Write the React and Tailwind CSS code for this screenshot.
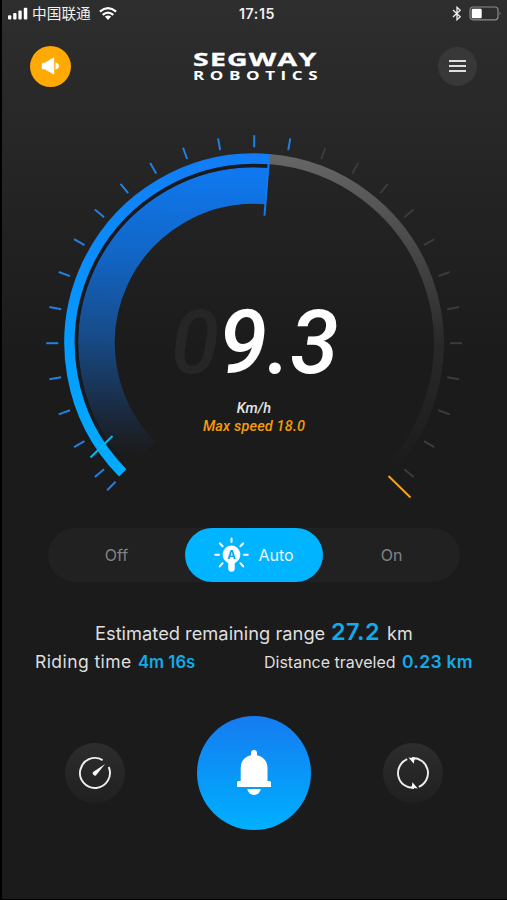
import React from "react";

const CX = 254.2;
const CY = 223.2;

function polar(radius, degrees) {
  const a = (degrees * Math.PI) / 180;
  return [CX + radius * Math.sin(a), CY - radius * Math.cos(a)];
}

function arc(radius, from, to) {
  const [x1, y1] = polar(radius, from);
  const [x2, y2] = polar(radius, to);
  return `M${x1} ${y1}A${radius} ${radius} 0 ${to - from > 180 ? 1 : 0} 1 ${x2} ${y2}`;
}

const TICKS = [-135, -130, -120, -110, -100, -90, -80, -70, -60, -50, -40, -30, -20, -10, 0, 10, 20, 30, 40, 50, 60, 70, 80, 90, 100, 110, 120, 130];

function StatusBar() {
  return (
    <div className="flex h-[27px] items-center justify-between pl-[6px] pr-[5px] text-white">
      <div className="flex w-[200px] items-center">
        <svg width="20" height="13" viewBox="0 0 20 13" fill="#fff">
          <rect x="0" y="8.2" width="3.3" height="4.3" rx="1" />
          <rect x="5.2" y="6" width="3.3" height="6.5" rx="1" />
          <rect x="10.4" y="3.5" width="3.3" height="9" rx="1" />
          <rect x="15.8" y="0.7" width="3.5" height="11.8" rx="1" />
        </svg>
        <span className="ml-[4px] font-['Noto_Sans_CJK_SC',sans-serif] text-[14.7px] leading-none text-[#f0f0f0]">中国联通</span>
        <svg className="ml-[8px]" width="18" height="13" viewBox="0 0 18 13" fill="none" stroke="#fff" strokeWidth="2.2">
          <path d="M0.9 4.6Q9 -2.2 17.1 4.6" />
          <path d="M3.7 7.9Q9 3.3 14.3 7.9" />
          <path d="M5.9 9.6Q9 7.2 12.1 9.6L9 12.9Z" fill="#fff" stroke="none" />
        </svg>
      </div>
      <span className="pl-[4px] pt-[1px] font-['Inter',sans-serif] text-[14.2px] font-semibold tracking-[0.6px] text-[#f0f0f0]">17:15</span>
      <div className="flex w-[200px] items-center justify-end gap-[7px]">
        <svg width="10" height="15" viewBox="0 0 10 15" fill="none" stroke="#eee" strokeWidth="1.3">
          <path d="M1 4L8.2 10.7L5 13.7V1.3L8.2 4.3L1 11" />
        </svg>
        <svg width="33" height="15" viewBox="0 0 33 15">
          <rect x="1" y="1" width="28" height="12.8" rx="3" fill="none" stroke="#8b8b8b" strokeWidth="1.2" />
          <rect x="2.7" y="2.7" width="10" height="9.5" rx="1.2" fill="#fff" />
          <path d="M30.7 5.5Q32.5 7.4 30.7 9.4Z" fill="#8b8b8b" />
        </svg>
      </div>
    </div>
  );
}

function Header() {
  return (
    <header className="flex h-[78px] items-center justify-between pl-[28px] pr-[30px]">
      <button className="flex size-[41px] items-center justify-center rounded-full bg-[#ffa904]">
        <svg width="19" height="18" viewBox="0 0 19 18" fill="#fff">
          <path d="M1.7 5.8H3.6L12.3 0.7Q13.2 0.3 13.2 1.2V16.8Q13.2 17.7 12.3 17.2L3.6 12.2H1.7Q0.8 12.2 0.8 11.3V6.7Q0.8 5.8 1.7 5.8Z" />
          <path d="M14.5 5.5Q18 6.1 18 9T14.5 12.5Z" />
        </svg>
      </button>
      <svg className="overflow-visible font-['Open_Sans',sans-serif]" width="126" height="34" viewBox="0 0 126 34" fill="#fff">
        <g transform="translate(1 16.6) scale(1.6 1)" stroke="#fff" strokeWidth="0.3">
          <text x="0" y="0" fontSize="17.8" fontWeight="700" textLength="77" lengthAdjust="spacing">SEGWAY</text>
        </g>
        <g transform="translate(1 30.8) scale(1.45 1)">
          <text x="0" y="0" fontSize="11.8" fontWeight="700" textLength="86" lengthAdjust="spacing">ROBOTICS</text>
        </g>
      </svg>
      <button className="flex size-[39px] flex-col items-center justify-center gap-[3px] rounded-full bg-[#383838]">
        <span className="h-[2px] w-[17px] bg-[#dedede]" />
        <span className="h-[2px] w-[17px] bg-[#dedede]" />
        <span className="h-[2px] w-[17px] bg-[#dedede]" />
      </button>
    </header>
  );
}

function Gauge() {
  const [nx1, ny1] = polar(188, 4.6);
  const [nx2, ny2] = polar(128, 4.6);
  return (
    <section className="relative h-[405px]">
      <svg className="-ml-[2px] block" width="507" height="405" viewBox="0 -15 507 405" fill="none">
        <defs>
          <linearGradient id="ring" gradientUnits="userSpaceOnUse" x1="0" y1="33" x2="0" y2="355">
            <stop offset="0" stopColor="#127cf5" />
            <stop offset="0.6" stopColor="#049cff" />
            <stop offset="1" stopColor="#00adff" />
          </linearGradient>
          <linearGradient id="band" gradientUnits="userSpaceOnUse" x1="10" y1="47" x2="0" y2="330">
            <stop offset="0" stopColor="#0f78ee" />
            <stop offset="0.3" stopColor="#1265c5" />
            <stop offset="0.6" stopColor="#174a85" />
            <stop offset="0.85" stopColor="#1a2a40" />
            <stop offset="0.94" stopColor="#1b2028" />
            <stop offset="1" stopColor="#1b1b1b" />
          </linearGradient>
          <linearGradient id="rest" gradientUnits="userSpaceOnUse" x1="0" y1="33" x2="0" y2="350">
            <stop offset="0" stopColor="#676767" />
            <stop offset="0.35" stopColor="#434343" />
            <stop offset="0.6" stopColor="#292929" />
            <stop offset="1" stopColor="#1b1b1b" />
          </linearGradient>
        </defs>
        <path d={arc(184.7, 4.5, 135)} stroke="url(#rest)" strokeWidth="10" />
        <path d={arc(157.7, -135, 4.5)} stroke="url(#band)" strokeWidth="36.5" />
        <path d={arc(177.8, -132, 4.5)} stroke="#171a1e" strokeWidth="3.6" />
        <path d={arc(184.7, -134.6, 4.5)} stroke="url(#ring)" strokeWidth="10.4" />
        <path d={`M${nx1} ${ny1}L${nx2} ${ny2}`} stroke="#127bf2" strokeWidth="2" />
        {TICKS.map((t) => {
          const [x1, y1] = polar(196, t);
          const [x2, y2] = polar(208, t);
          return <path key={t} d={`M${x1} ${y1}L${x2} ${y2}`} stroke={t <= 10 ? "#2080e4" : "#3c3c3c"} strokeWidth="2" />;
        })}
        <path d="M90.5 337.5L112.5 316" stroke="#0cb4e8" strokeWidth="2" />
        <path d="M388.5 356L410.5 377.5" stroke="#f0a51c" strokeWidth="2" />
      </svg>
      <div className="absolute inset-x-0 top-[193px] flex flex-col items-center font-['Roboto',sans-serif] font-medium italic">
        <div className="text-[88px] leading-[90px] tracking-[-0.4px] text-white">
          <span className="text-[#262626]">0</span>9.3
        </div>
        <div className="-ml-px mt-[12px] text-[14.5px] leading-[18px] text-[#e6e6e6]">Km/h</div>
        <div className="-ml-px text-[14.5px] leading-[18px] tracking-[0.15px] text-[#f39c0c]">Max speed 18.0</div>
      </div>
    </section>
  );
}

function AutoBulb() {
  return (
    <svg width="35" height="36" viewBox="0 0 35 36" fill="none">
      <path d="M17.5 1.5V5M5.8 6.2L8.6 9.2M29.2 6.2L26.4 9.2M1.2 17.7H5M30 17.7H33.8M5.8 29.4L8.6 26.2M29.2 29.4L26.4 26.2" stroke="#fff" strokeWidth="2" strokeLinecap="round" />
      <path d="M17.5 8.5A9.2 9.2 0 0 0 14.3 26.2V31.5A3.2 3.2 0 0 0 20.7 31.5V26.2A9.2 9.2 0 0 0 17.5 8.5Z" fill="#fff" />
      <text x="17.5" y="21.8" fill="#00a9ee" fontSize="11.5" fontWeight="700" textAnchor="middle" fontFamily="Inter, sans-serif">A</text>
    </svg>
  );
}

function LightSwitch() {
  return (
    <div className="ml-[46px] mt-[18px] flex h-[54px] w-[412px] rounded-full bg-[#212121] font-['Inter',sans-serif] text-[16px] text-[#828282]">
      <button className="flex flex-1 items-center justify-center">Off</button>
      <button className="flex w-[138px] items-center justify-center gap-[9px] rounded-full bg-[#00b4ff] text-[#eafaff]">
        <AutoBulb />
        <span>Auto</span>
      </button>
      <button className="flex flex-1 items-center justify-center">On</button>
    </div>
  );
}

function Stats() {
  return (
    <div className="mt-[35px] font-['Inter',sans-serif] text-[#dfdfdf]">
      <div className="flex h-[30px] items-baseline pl-[93px]">
        <span className="w-[236px] whitespace-nowrap text-[18.3px] leading-[29px]">Estimated remaining range</span>
        <span className="w-[56px] text-[23.5px] font-semibold leading-[30px] tracking-[0.4px] text-[#12abea]">27.2</span>
        <span className="text-[18px] leading-[30px]">km</span>
      </div>
      <div className="flex h-[30px] items-baseline pl-[33px]">
        <span className="w-[103px] whitespace-nowrap text-[17.5px] leading-[30px] tracking-[0.42px]">Riding time</span>
        <span className="w-[126px] whitespace-nowrap text-[16.7px] font-semibold leading-[30px] text-[#12abea]">4m 16s</span>
        <span className="w-[138px] whitespace-nowrap text-[16px] leading-[30px]">Distance traveled</span>
        <span className="whitespace-nowrap text-[17.5px] font-semibold leading-[30px] tracking-[0.3px] text-[#12abea]">0.23 km</span>
      </div>
    </div>
  );
}

function Controls() {
  return (
    <div className="mt-[38px] flex h-[115px] items-center pl-[63px]">
      <button className="flex size-[60px] items-center justify-center rounded-full bg-linear-to-b from-[#2d2d2d] to-[#202020]">
        <svg width="34" height="34" viewBox="0 0 34 34" fill="none">
          <path d="M24.6 4.1A15 15 0 1 0 30.7 11" stroke="#eee" strokeWidth="1.9" />
          <path d="M27.1 8.1L18.7 18.5A2.1 2.1 0 1 1 15.8 15.6Z" fill="#f5f5f5" />
        </svg>
      </button>
      <button className="ml-[72px] flex size-[114px] items-center justify-center rounded-full bg-linear-to-b from-[#157bf0] to-[#00b0ff]">
        <svg className="mt-px" width="36" height="48" viewBox="0 0 36 48" fill="#fff">
          <path d="M18 1A3 3 0 0 0 15 4V6.2C8 7.7 4.7 12.7 4.7 19V32H2.5Q1 32 1 33.5V38H35V33.5Q35 32 33.5 32H31.5V19C31.5 12.7 28 7.7 21 6.2V4A3 3 0 0 0 18 1Z" />
          <path d="M11.3 40H24.8A6.8 6.8 0 0 1 11.3 40Z" />
        </svg>
      </button>
      <button className="ml-[72px] flex size-[60px] items-center justify-center rounded-full bg-linear-to-b from-[#2d2d2d] to-[#202020]">
        <svg width="34" height="34" viewBox="0 0 34 34" fill="none">
          <path d="M11.2 3.2A15 15 0 0 0 18 32" stroke="#eee" strokeWidth="1.9" />
          <path d="M16 2A15 15 0 0 1 22.8 30.8" stroke="#eee" strokeWidth="1.9" />
          <path d="M12.4 1.4L20.6 2.4L18.4 3.8L17.8 7.8Z" fill="#f5f5f5" />
          <path d="M21.8 32.6L13.6 31.6L15.8 30.2L16.4 26.2Z" fill="#f5f5f5" />
        </svg>
      </button>
    </div>
  );
}

export default function App() {
  return (
    <main className="h-[900px] w-[507px] overflow-hidden border-b border-l-2 border-black bg-linear-to-b from-[#2e2e2e] via-[#1b1b1b] via-40% to-[#1b1b1b]">
      <StatusBar />
      <Header />
      <Gauge />
      <LightSwitch />
      <Stats />
      <Controls />
    </main>
  );
}
